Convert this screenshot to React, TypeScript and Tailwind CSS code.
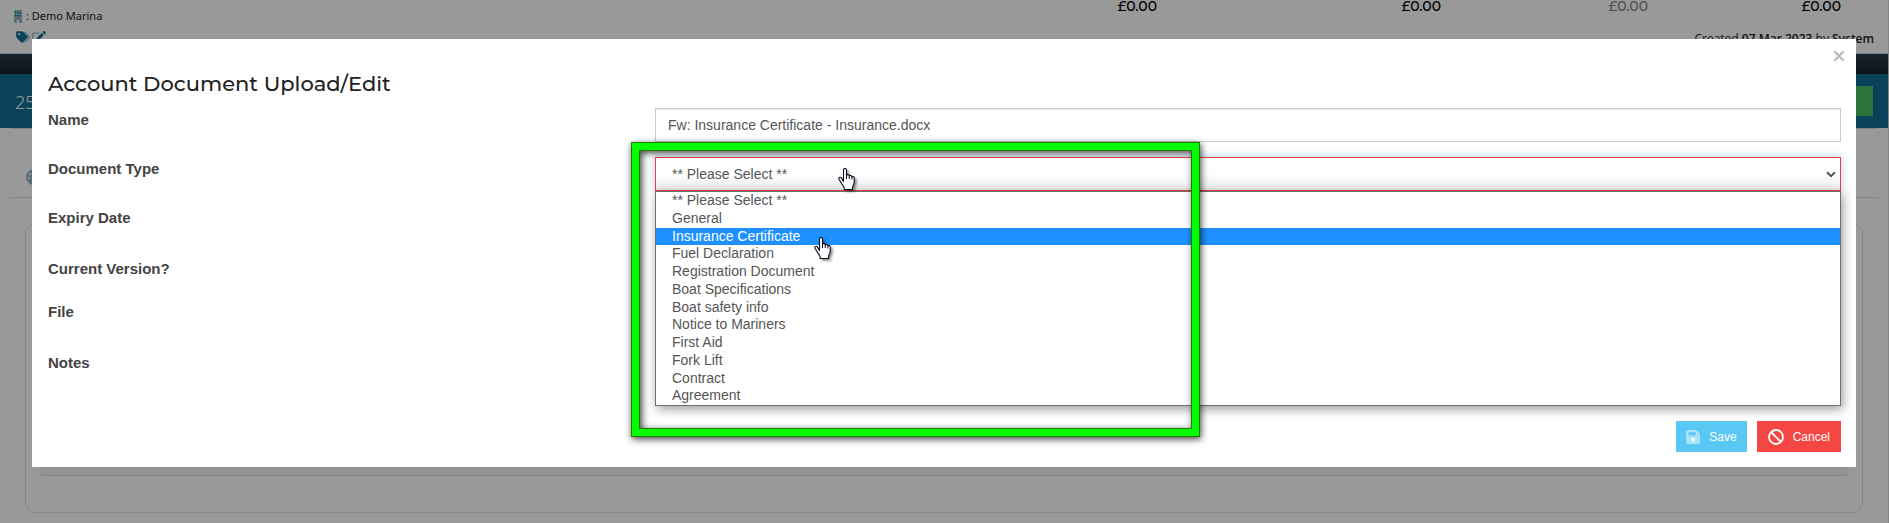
import React from "react";
import { FaPalette } from "react-icons/fa";

const documentTypes = [
  "** Please Select **",
  "General",
  "Insurance Certificate",
  "Fuel Declaration",
  "Registration Document",
  "Boat Specifications",
  "Boat safety info",
  "Notice to Mariners",
  "First Aid",
  "Fork Lift",
  "Contract",
  "Agreement",
];

function BuildingIcon() {
  return (
    <svg viewBox="0 0 10 13" className="h-[13px] w-[10px]" aria-hidden="true">
      <path d="M1 0h8v13H6.200v-3H3.800v3H1z" fill="#93b9c9" />
      <path
        d="M2 2h1.300v1.300H2zM4.300 2h1.300v1.300H4.300zM6.600 2h1.300v1.300H6.600zM2 5h1.300v1.300H2zM4.300 5h1.300v1.300H4.300zM6.600 5h1.300v1.300H6.600z"
        fill="#117194"
      />
    </svg>
  );
}

function TagsIcon() {
  return (
    <svg viewBox="0 0 14 12" className="h-3 w-[14px]" aria-hidden="true">
      <path d="M8.300.8l4.600 4.500a1.500 1.500 0 010 2.100L9.200 11.400" fill="none" stroke="#93b9c9" strokeWidth="1.200" />
      <path
        fillRule="evenodd"
        d="M1.200.2h4.500c.4 0 .8.2 1 .4l4.500 4.500a1.500 1.500 0 010 2.100l-4 4a1.500 1.500 0 01-2.100 0L.6 6.700A1.500 1.500 0 01.2 5.700V1.200a1 1 0 011-1zM3.200 2a1.100 1.100 0 100 2.200A1.100 1.100 0 003.200 2z"
        fill="#117194"
      />
    </svg>
  );
}

function EditIcon() {
  return (
    <svg viewBox="0 0 14 13" className="h-[13px] w-[14px]" aria-hidden="true">
      <path d="M7 2.200H2a1.300 1.300 0 00-1.300 1.300v7.500A1.300 1.300 0 002 12.300h7.500a1.300 1.300 0 001.300-1.300V8" fill="none" stroke="#93b9c9" strokeWidth="1.300" />
      <path d="M4.500 9.200l.6-2.700L9.700 1.900l2.200 2.200-4.600 4.600zM10.400 1.200l.8-.8a1.200 1.200 0 011.700 0l.6.600a1.200 1.200 0 010 1.600l-.9.900z" fill="#117194" />
    </svg>
  );
}

function HandCursor({ className }: { className: string }) {
  return (
    <svg
      viewBox="0 0 17 22"
      className={`pointer-events-none absolute h-[22px] w-[17px] drop-shadow-[2px_2px_1px_rgba(0,0,0,0.4)] ${className}`}
      aria-hidden="true"
    >
      <path
        d="M5.500 13.500V2c0-2 3-2 3 0v5.500c.3-1.300 2.600-1.200 2.800.5.600-1 2.400-.8 2.600.9.700-.8 2.200-.4 2.300 1V14c0 2.500-1.700 4-1.700 6v1.500H6.200V20c0-1.600-1.700-2.800-2.500-4.500L1 11.300c-.9-1.700 1.200-2.600 2.300-1.400z"
        fill="#fff"
        stroke="#0b0b20"
        strokeWidth="1.100"
        strokeLinejoin="round"
      />
      <path d="M8.500 7v4M11.300 8v3M13.900 9v2.500" stroke="#0b0b20" strokeWidth="1" />
    </svg>
  );
}

function FieldRow({
  id,
  label,
  className,
  children,
}: {
  id: string;
  label: string;
  className: string;
  children?: React.ReactNode;
}) {
  return (
    <div className={`grid grid-cols-3 ${className}`}>
      <div className="px-4">
        <label htmlFor={id} className="text-[15px] font-bold leading-6 text-[#444]">
          {label}
        </label>
      </div>
      <div className="relative col-span-2 px-[15px]">{children}</div>
    </div>
  );
}

function AccountPage() {
  return (
    <div className="flex min-h-screen flex-col border-r border-[#ddd] bg-white" aria-hidden="true">
      <header className="flex h-[54px] justify-between border-b border-[#ddd] font-['Noto_Sans',sans-serif] text-[#222]">
        <div className="flex flex-col gap-[6px] pl-[13px] pt-[7px]">
          <div className="flex h-[18px] items-center gap-[3px] text-[11px]">
            <BuildingIcon />
            <span>: Demo Marina</span>
          </div>
          <div className="flex h-3 items-center gap-[2px] pl-[3px]">
            <TagsIcon />
            <EditIcon />
          </div>
        </div>
        <div className="flex flex-col items-end">
          <div className="flex pr-[47px] text-right font-['Montserrat','Inter',sans-serif] text-[14px] font-medium leading-[12px] text-black">
            <span>£0.00</span>
            <span className="w-[284px]">£0.00</span>
            <span className="w-[207px] text-[#888]">£0.00</span>
            <span className="w-[193px]">£0.00</span>
          </div>
          <p className="pr-[14px] pt-[18px] font-['Open_Sans','Noto_Sans',sans-serif] text-[12px] leading-[18px]">
            Created <b className="font-semibold">07 Mar 2023</b> by <b className="font-semibold">System</b>
          </p>
        </div>
      </header>
      <div className="h-5 bg-linear-to-b from-[#283c4d] to-[#12222a]" />
      <div className="flex h-[54px] items-center justify-between bg-[#117194] pl-[15px] pr-[15px]">
        <span className="pt-[2px] font-['Noto_Sans',sans-serif] text-[18px] font-light text-white">25</span>
        <span className="h-[30px] w-[60px] bg-[#49c064]" />
      </div>
      <div className="mx-[10px] flex h-[70px] items-center border-b border-t border-b-[#ddd] border-t-[#ddd] pl-4 pt-7">
        <FaPalette className="size-4 text-[#93b9c9]" />
      </div>
      <div className="mx-[25px] mb-[10px] mt-[26px] flex flex-1 flex-col rounded-[10px] border border-[#e0e0e0] px-[15px] pb-9">
        <div className="flex-1 border border-t-0 border-[#ddd] bg-[#f6f6f6]" />
      </div>
    </div>
  );
}

function DocumentDialog() {
  return (
    <section role="dialog" aria-labelledby="dialog-title" className="relative bg-white font-['Liberation_Sans',Arial,sans-serif]">
      <button type="button" aria-label="Close" className="absolute right-[11px] top-[11px] text-[#bbb]">
        <svg viewBox="0 0 12 12" className="size-3" aria-hidden="true">
          <path d="M1.300 1.300l9.400 9.400M10.700 1.300L1.300 10.700" stroke="currentColor" strokeWidth="2.300" />
        </svg>
      </button>
      <h2 id="dialog-title" className="px-4 pb-[9px] pt-[30px] font-['Montserrat','Inter',sans-serif] text-[21px] font-medium leading-[30px] text-[#222]">
        Account Document Upload/Edit
      </h2>
      <form>
        <FieldRow id="name" label="Name" className="h-[49px]">
          <input
            id="name"
            defaultValue="Fw: Insurance Certificate - Insurance.docx"
            className="block h-[34px] w-full border border-[#ccc] px-3 text-[14px] text-[#555] shadow-[inset_0_1px_1px_rgba(0,0,0,0.075)]"
          />
        </FieldRow>
        <FieldRow id="type" label="Document Type" className="h-[49px]">
          <div className="relative">
            <select
              id="type"
              className="block h-[34px] w-full appearance-none border border-[#f04040] bg-white bg-linear-to-b from-white from-50% to-[#ebebeb] px-4 text-[14px] text-[#555] shadow-[0_0_8px_rgba(102,175,233,0.6)] outline-none"
            >
              <option>** Please Select **</option>
            </select>
            <svg viewBox="0 0 10 7" className="pointer-events-none absolute right-[5px] top-[14px] h-[7px] w-[10px]" aria-hidden="true">
              <path d="M1 1.200l4 4 4-4" fill="none" stroke="#555" strokeWidth="2" />
            </svg>
            <ul
              role="listbox"
              aria-label="Document Type"
              className="absolute inset-x-0 top-[34px] z-10 grid h-[215px] grid-rows-12 border border-[#707070] bg-white text-[14px] leading-4 text-[#555] shadow-[2px_3px_10px_rgba(0,0,0,0.4)]"
            >
              {documentTypes.map((type, index) => (
                <li
                  key={type}
                  role="option"
                  aria-selected={index === 2}
                  className={index === 2 ? "bg-[#1e90ff] px-4 text-white" : "px-4"}
                >
                  {type}
                </li>
              ))}
            </ul>
            <div className="pointer-events-none absolute -left-6 -top-[15px] z-20 h-[295px] w-[569px] border border-[#207a00] shadow-[1px_2px_7px_rgba(0,0,0,0.75)]">
              <div className="h-full border-[7px] border-[#00ff00]">
                <div className="h-full border border-[#207a00] shadow-[inset_2px_2px_7px_rgba(0,0,0,0.75)]" />
              </div>
            </div>
            <HandCursor className="left-[183px] top-[11px] z-30" />
            <HandCursor className="left-[159px] top-[80px] z-30" />
          </div>
        </FieldRow>
        <FieldRow id="expiry" label="Expiry Date" className="h-[51px]">
          <input id="expiry" className="block h-[34px] w-full border border-[#ccc] px-3 text-[14px]" />
        </FieldRow>
        <FieldRow id="current" label="Current Version?" className="h-[43px]">
          <input id="current" type="checkbox" className="mt-1" />
        </FieldRow>
        <FieldRow id="file" label="File" className="h-[51px]">
          <input id="file" type="file" className="text-[14px] text-transparent file:text-transparent" />
        </FieldRow>
        <FieldRow id="notes" label="Notes" className="h-[54px]">
          <textarea id="notes" className="block h-12 w-full resize-none border border-[#ccc] px-3 text-[14px]" />
        </FieldRow>
        <div className="flex justify-end gap-[10px] px-[15px] pb-[15px] pt-4 text-[12px] text-white">
          <button type="button" className="flex h-[31px] items-center gap-[9px] bg-[#5ac8f5] px-[10px]">
            <svg viewBox="0 0 14 14" className="size-[14px]" aria-hidden="true">
              <path
                fillRule="evenodd"
                d="M2 0h8.300L14 3.700V12a2 2 0 01-2 2H2a2 2 0 01-2-2V2a2 2 0 012-2zM2.500 2.200v3h7v-3z"
                fill="#a9e2fb"
              />
              <circle cx="7" cy="9.500" r="2" fill="#fff" />
            </svg>
            <span>Save</span>
          </button>
          <button type="button" className="flex h-[31px] items-center gap-[9px] bg-[#f44642] px-[11px]">
            <svg viewBox="0 0 16 16" className="size-4" aria-hidden="true">
              <path d="M3 3l10 10" stroke="#fff" strokeWidth="1.800" />
              <circle cx="8" cy="8" r="7" fill="none" stroke="#fff" strokeWidth="1.800" />
            </svg>
            <span>Cancel</span>
          </button>
        </div>
      </form>
    </section>
  );
}

export default function App() {
  return (
    <div className="relative min-h-screen">
      <AccountPage />
      <div className="absolute inset-0 bg-black/40 pl-8 pr-[33px] pt-[39px]">
        <DocumentDialog />
      </div>
    </div>
  );
}
